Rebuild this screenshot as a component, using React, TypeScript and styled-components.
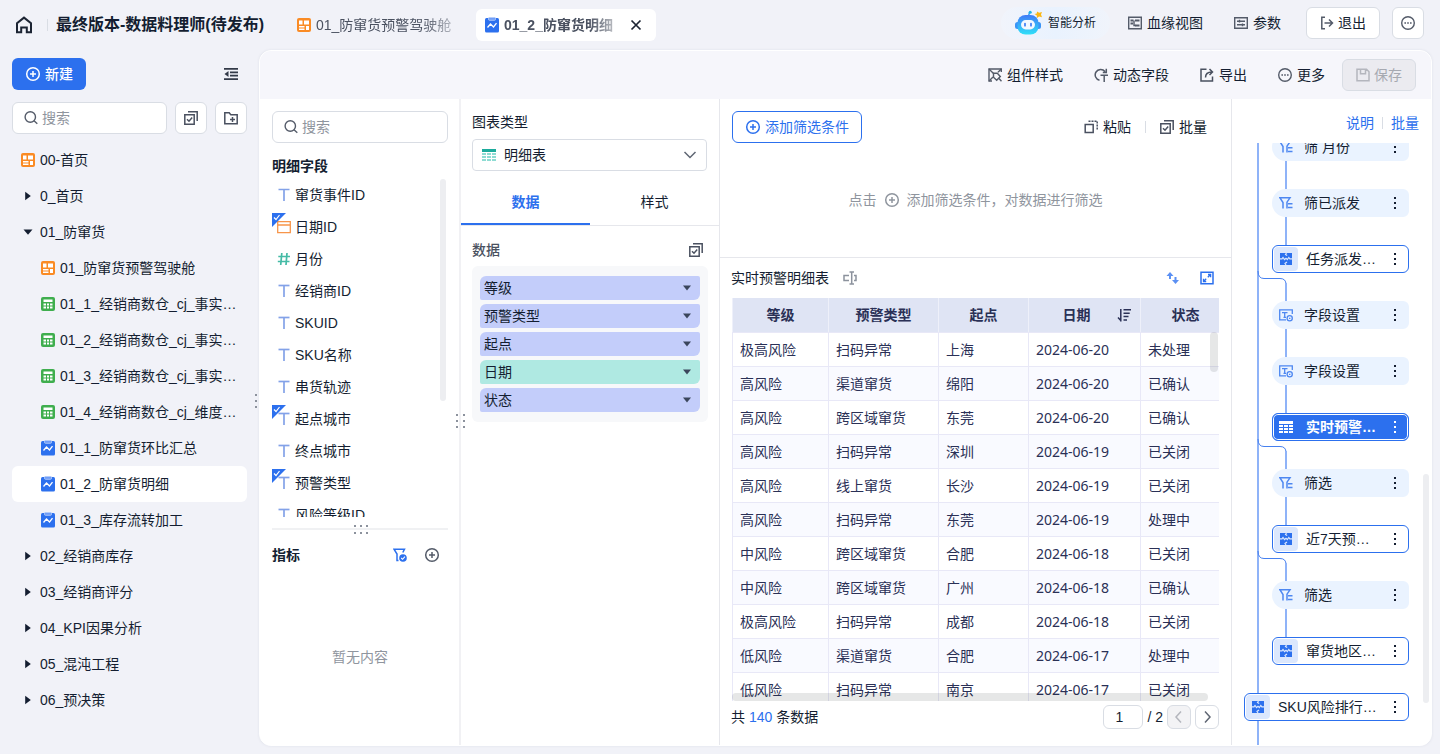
import React from "react";
import styled, { createGlobalStyle, css } from "styled-components";

const color = {
  ink: "#141e31",
  soft: "#4a5160",
  mute: "#8f959e",
  blue: "#2c70ee",
  line: "#e6e7ec",
  border: "#d9dde4",
  page: "#f1f2f8",
  table: "#2a3056",
};

const GlobalStyle = createGlobalStyle`
  *, *::before, *::after { box-sizing: border-box; }
  html, body { margin: 0; padding: 0; }
  body { background: ${color.page}; }
  body, button, input, select {
    font-family: "Liberation Sans", "Noto Sans CJK SC", sans-serif;
    font-size: 14px;
    line-height: 20px;
    color: ${color.ink};
  }
  button { border: 0; background: none; padding: 0; margin: 0; cursor: pointer; white-space: nowrap; }
  ul { list-style: none; margin: 0; padding: 0; }
  h1, h2, p { margin: 0; }
  svg { display: block; flex: none; }
`;

/* ---------- icons ---------- */

type IconProps = { children: React.ReactNode; size?: number; tone?: string; w?: number };

const Icon = ({ children, size = 14, tone = "currentColor", w = 1 }: IconProps) => (
  <svg width={size} height={size} viewBox={`0 0 ${size} ${size}`} fill="none" stroke={tone} strokeWidth={w} aria-hidden="true">
    {children}
  </svg>
);

const HomeIcon = () => (
  <Icon size={18} tone="#1c2433" w={2}>
    <path d="M2 16.200V7.200L9 1.600l7 5.600v9H11.800V11.500H6.200v4.700Z" />
  </Icon>
);
const PlusCircle = ({ tone = "currentColor" }: { tone?: string }) => (
  <Icon size={16} tone={tone} w={1.5}>
    <circle cx="8" cy="8" r="6.300" />
    <path d="M8 5v6M5 8h6" />
  </Icon>
);
const SearchIcon = () => (
  <Icon size={14} tone="#545b69" w={1.4}>
    <circle cx="6.300" cy="6" r="5.200" />
    <path d="M10 9.700l3.300 3" />
  </Icon>
);
const OutdentIcon = () => (
  <Icon size={14} tone="#333a48" w={1.7}>
    <path d="M0 1.800h14M6 5.300h8M6 8.700h8M0 12.200h14" />
    <path d="M4.500 4v6L.5 7z" fill="#333a48" stroke="none" />
  </Icon>
);
const BatchIcon = ({ tone = "#4a5160" }: { tone?: string }) => (
  <Icon size={14} tone={tone} w={1.5}>
    <path d="M.8 3.800h9.400v9.400H.8zM4 .8h9.200V10" />
    <path d="M3 8.200l2 2 3.200-3.600" />
  </Icon>
);
const FolderPlusIcon = () => (
  <Icon size={14} tone="#4a5160" w={1.5}>
    <path d="M.8 1.800h4.400l1.600 2h6.400v9H.8z" />
    <path d="M8.500 6v5M6 8.500h5" />
  </Icon>
);
const BoardIcon = () => (
  <Icon size={14}>
    <rect width="14" height="14" rx="2" fill="#fa8b24" stroke="none" />
    <path d="M2 2.500h3.500v4H2zM7 2.500h5v4H7zM2 8h5.500v1.500H2zM2 10.500h5.500V12H2zM9 8h3v4H9z" fill="#fff" stroke="none" />
  </Icon>
);
const SheetIcon = () => (
  <Icon size={14}>
    <rect width="14" height="14" rx="2" fill="#3fae4e" stroke="none" />
    <path d="M2.500 2.500h9v2.500h-9zM2.500 6.500H5v2H2.500zM6 6.500h2v2H6zM9 6.500h2.500v2H9zM2.500 9.600H5v2H2.500zM6 9.600h2v2H6zM9 9.600h2.500v2H9z" fill="#fff" stroke="none" />
  </Icon>
);
const ClipIcon = () => (
  <svg width="14" height="16" viewBox="0 0 14 16" aria-hidden="true">
    <rect y="1" width="14" height="14.500" rx="1.500" fill="#2c70ee" />
    <rect x="3.500" y=".3" width="7" height="3" rx="1" fill="#6f9df7" stroke="#cfdffc" strokeWidth=".7" />
    <path d="M2.500 10.500L5.500 7l3 3 3-3.800" fill="none" stroke="#fff" strokeWidth="1.300" />
  </svg>
);
const CloseIcon = () => (
  <Icon size={12} tone="#1c2433" w={1.7}>
    <path d="M1.500 1.500l9 9M10.500 1.500l-9 9" />
  </Icon>
);
const RobotIcon = () => (
  <svg width="28" height="26" viewBox="0 0 28 26" aria-hidden="true">
    <defs>
      <linearGradient id="bot" x1="0" y1="0" x2="0" y2="1">
        <stop offset="0" stopColor="#3f7bf7" />
        <stop offset="1" stopColor="#2fe0f8" />
      </linearGradient>
    </defs>
    <path d="M13.500 6l1.200-4" stroke="#35a0f5" strokeWidth="1.500" />
    <circle cx="15.200" cy="2.200" r="1.500" fill="#1fb4e8" />
    <rect x="0" y="12" width="5" height="7" rx="2.500" fill="#3a94f6" />
    <rect x="21" y="12" width="5" height="7" rx="2.500" fill="#3a94f6" />
    <rect x="2.500" y="5" width="21" height="19.500" rx="8" fill="url(#bot)" />
    <rect x="6" y="10" width="14" height="9.500" rx="4.700" fill="#f3f9ff" />
    <path d="M10 13.500v2.200M16 13.500v2.200" stroke="#3b7cf5" strokeWidth="1.700" strokeLinecap="round" />
    <path d="M22 1.500l2.200 1.200L27 2l-1 2.600 1 2.600-2.900-.6L22 8l-.2-2.600L19.500 4l2.300-.6z" fill="#fbb713" />
  </svg>
);
const LineageIcon = () => (
  <Icon size={14} tone="#545b69" w={1.4}>
    <path d="M.7 1.200h12.600v11.600H.7z" />
    <path d="M2.500 4.500H5.500M2.500 7.500H5M7 4.500h4.500M7 9.500h4.500" strokeWidth="2" />
    <path d="M6 4.500v5h1.500" />
  </Icon>
);
const ParamIcon = () => (
  <Icon size={14} tone="#545b69" w={1.4}>
    <path d="M.7 1.700h12.600v10.600H.7z" />
    <path d="M3 5.200h8M3 8.800h8M5.500 3.800v2.800M8.500 7.400v2.800" />
  </Icon>
);
const ExitIcon = () => (
  <Icon size={14} tone="#545b69" w={1.5}>
    <path d="M5 1.200H1.800v11.600H5M4.500 7h8M9 3.500L12.500 7 9 10.500" />
  </Icon>
);
const MoreCircle = () => (
  <Icon size={14} tone="#545b69" w={1.4}>
    <circle cx="7" cy="7" r="6.300" />
    <path d="M3.400 7H5M6.200 7h1.600M9 7h1.600" strokeWidth="1.700" />
  </Icon>
);
const StyleIcon = () => (
  <Icon size={14} tone="#545b69" w={1.4}>
    <path d="M13.300 4V1H1v12h3" />
    <path d="M1 1l5 5M1 13l4-4M13.300 1L10 4.300" />
    <path d="M5.500 5.300h3.800l3 3.200-3.600 3.800-3.200-3.100zM11 10.500l2.500 2.700" />
  </Icon>
);
const DynamicIcon = () => (
  <Icon size={14} tone="#545b69" w={1.5}>
    <path d="M5.500 12.300A5.500 5.500 0 1 1 11 3.500M12.300.8v3.700H8.800" />
    <path d="M6.500 7.300h7.500M10.200 7.300V14" />
  </Icon>
);
const ExportIcon = () => (
  <Icon size={14} tone="#4a5160" w={1.5}>
    <path d="M6.500 1.200H1v11.800h11.500V8.500" />
    <path d="M5.500 9.500c0-4 2-5.500 6.500-5.500M9.500 1l3 3-3 3" />
  </Icon>
);
const SaveIcon = () => (
  <Icon size={14} tone="#b4b6bd" w={1.5}>
    <path d="M1 1.200h9.500L13 3.700v9.100H1zM4.500 1.200v4.600h5V1.200" />
  </Icon>
);
const TextTypeIcon = () => (
  <Icon size={14} tone="#83a2e8" w={1.7}>
    <path d="M1.500 1.500h11" />
    <path d="M7 1.500v11.500" />
  </Icon>
);
const DateTypeIcon = () => (
  <Icon size={14} tone="#f7954a" w={1.3}>
    <path d="M.7 1.700h12.600v11H.7zM.7 5h12.600" />
  </Icon>
);
const NumberTypeIcon = () => (
  <Icon size={14} tone="#45bba6" w={1.7}>
    <path d="M4.800 1L3.700 13M10 1L9 13M1.300 4.500h11.700M.8 9.500h11.700" />
  </Icon>
);
const FilterCheckIcon = () => (
  <Icon size={14} tone="#2c70ee" w={1.5}>
    <path d="M5.500 12.500H4V6L1 1.200h10.500L9.800 4.500" />
    <circle cx="10" cy="10" r="3.800" fill="#2c70ee" stroke="none" />
    <path d="M8.200 10l1.400 1.300 2.300-2.600" stroke="#fff" strokeWidth="1.100" />
  </Icon>
);
const TableGlyph = () => (
  <Icon size={14}>
    <path d="M0 1h14v3H0z" fill="#1cab9c" stroke="none" />
    <path d="M0 5h4v2H0zM5 5h4v2H5zM10 5h4v2h-4zM0 8h4v2H0zM5 8h4v2H5zM10 8h4v2h-4zM0 11h4v2H0zM5 11h4v2H5zM10 11h4v2h-4z" fill="#8edcd3" stroke="none" />
  </Icon>
);
const WhiteTableGlyph = () => (
  <Icon size={14}>
    <path d="M0 1h14v3H0zM0 5h4v2H0zM5 5h4v2H5zM10 5h4v2h-4zM0 8h4v2H0zM5 8h4v2H5zM10 8h4v2h-4zM0 11h4v2H0zM5 11h4v2H5zM10 11h4v2h-4z" fill="#fff" stroke="none" />
  </Icon>
);
const Chevron = ({ d = "M1.500 4L7 9.500l5.500-5.500", tone = "#5f6673" }: { d?: string; tone?: string }) => (
  <Icon size={14} tone={tone} w={1.5}>
    <path d={d} />
  </Icon>
);
const Caret = ({ open = false, tone = "#141e31" }: { open?: boolean; tone?: string }) => (
  <Icon size={10}>
    <path d={open ? "M.5 2.500h9L5 7.800z" : "M2.200.8v8.400L7.800 5z"} fill={tone} stroke="none" />
  </Icon>
);
const PillCaret = () => (
  <Icon size={10}>
    <path d="M1 2.500h8L5 7.500z" fill="#3b465c" stroke="none" />
  </Icon>
);
const PasteIcon = () => (
  <Icon size={14} tone="#4a5160" w={1.5}>
    <path d="M1.200 4.500h8v8h-8z" />
    <path d="M4.500 1.200h8.700v8.800" strokeDasharray="2 1" />
  </Icon>
);
const RenameIcon = () => (
  <Icon size={14} tone="#8c929d" w={1.5}>
    <path d="M6 4.500H1v5h5M11 4.500h2v5h-2M6.500 1h4.500M6.500 13h4.500M8.700 1v12" />
  </Icon>
);
const SwapIcon = () => (
  <Icon size={14}>
    <path d="M.5 5L4 1l3.500 4H5v3H3V5zM6 9h2.500V6h2v3H13l-3.500 4z" fill="#5b90f3" stroke="none" />
  </Icon>
);
const ExpandIcon = () => (
  <Icon size={14} tone="#2c70ee" w={1.5}>
    <path d="M1 1.200h12v11.600H1z" />
    <path d="M7.800 6.200L10.500 3.500M8 3.500h2.600v2.700M6.200 7.800L3.500 10.500M3.500 7.800v2.700h2.700" strokeWidth="1.300" />
  </Icon>
);
const SortIcon = () => (
  <Icon size={14} tone="#2a3056" w={1.5}>
    <path d="M3.800 1v12.500M1 9.500l2.800 3M6.500 1.800H14M6.500 5.200h6.200M6.500 8.600h5M6.500 12h3.500" />
  </Icon>
);
const FilterEqIcon = () => (
  <Icon size={14} tone="#4d87f1" w={1.5}>
    <path d="M4 12.500V6.500L1 1.800h10L8 6.200v6.300M9 7.800h4.500M9 11.500h4.500" />
  </Icon>
);
const FieldSetIcon = () => (
  <Icon size={14} tone="#4d87f1" w={1.3}>
    <path d="M7 11.800H.7V1.800h12.600V6M3 4.600h5.500M5.700 4.600v4.700M4.500 9.300h2.500" />
    <circle cx="10.700" cy="10.300" r="2.600" />
    <path d="M10 10.300h1.400" />
  </Icon>
);
const GridIcon = () => (
  <Icon size={14}>
    <path d="M1 1h12v12H1z" fill="#2c70ee" stroke="none" />
    <path d="M1 6.800h2l1-1.300 1.500 2L7 6.200l1.300 1.300 1.500-2 1 1.300H13M7.500 1l-1 1.500 1.700 1M7 13l-1-1.500L8 10" stroke="#dbe7fd" strokeWidth="1.200" />
  </Icon>
);
const Kebab = ({ tone = "#141e31" }: { tone?: string }) => (
  <Icon size={14}>
    <path d="M6 1h2v2H6zM6 6h2v2H6zM6 11h2v2H6z" fill={tone} stroke="none" />
  </Icon>
);

/* ---------- shell ---------- */

const Shell = styled.div`
  display: flex;
  flex-direction: column;
  height: 100vh;
  min-height: 640px;
  min-width: 1200px;
  background: ${color.page};
  overflow: hidden;
`;
const Header = styled.header`
  display: flex;
  align-items: center;
  flex: none;
  height: 50px;
  padding: 0 16px 0 15px;
`;
const HeadDivider = styled.i`
  width: 1px;
  height: 12px;
  margin: 0 8px 0 14px;
  background: ${color.border};
`;
const Title = styled.h1`
  font-size: 16px;
  line-height: 24px;
  font-weight: 700;
`;
const FileTabs = styled.nav`
  display: flex;
  margin-left: 24px;
  gap: 8px;
`;
const FileTab = styled.button<{ $active?: boolean }>`
  display: flex;
  align-items: center;
  gap: 5px;
  width: 180px;
  height: 32px;
  padding: 0 9px;
  border-radius: 6px;
  color: ${color.soft};
  background: ${(p) => (p.$active ? "#fff" : "transparent")};
  font-weight: ${(p) => (p.$active ? 600 : 400)};
`;
const FadeText = styled.span`
  margin-right: 12px;
  mask-image: linear-gradient(to right, #000 78%, rgba(0, 0, 0, 0.4));
`;
const HeadTools = styled.div`
  display: flex;
  align-items: center;
  align-self: flex-start;
  margin: 7px 0 0 auto;
  height: 32px;
  gap: 12px;
`;
const SmartButton = styled.button`
  display: flex;
  align-items: center;
  gap: 5px;
  height: 32px;
  padding: 0 14px;
  border-radius: 16px;
  font-size: 12px;
  background: linear-gradient(90deg, #f1f4fb, #e9f2fe 50%, #f0f4fb);
`;
const TextButton = styled.button`
  display: flex;
  align-items: center;
  gap: 5px;
  height: 32px;
`;
const HeadLinks = styled.div`
  display: flex;
  gap: 31px;
  margin: 0 13px 0 6px;
`;
const OutlineButton = styled.button<{ $square?: boolean; $muted?: boolean; $accent?: boolean }>`
  display: flex;
  align-items: center;
  justify-content: center;
  gap: 4px;
  flex: none;
  height: 32px;
  padding: 0 ${(p) => (p.$square ? 0 : p.$accent ? 12 : 13)}px;
  ${(p) => p.$square && "width: 32px;"}
  border: 1px solid ${(p) => (p.$accent ? color.blue : color.border)};
  border-radius: 6px;
  background: ${(p) => (p.$muted ? "#ebebf0" : "#fff")};
  color: ${(p) => (p.$accent ? color.blue : p.$muted ? "#a6a9b1" : color.ink)};
`;
const Body = styled.div`
  display: flex;
  flex: 1;
  min-height: 0;
  padding: 0 8px 8px 0;
`;

/* ---------- sidebar ---------- */

const Sidebar = styled.aside`
  position: relative;
  flex: none;
  width: 259px;
  padding: 8px 12px;
`;
const SideTop = styled.div`
  display: flex;
  align-items: center;
  justify-content: space-between;
  padding-right: 9px;
`;
const NewButton = styled.button`
  display: flex;
  align-items: center;
  gap: 4px;
  height: 32px;
  padding: 0 13px;
  border-radius: 6px;
  background: ${color.blue};
  color: #fff;
  font-weight: 500;
`;
const SideSearch = styled.div`
  display: flex;
  gap: 8px;
  width: 235px;
  margin: 12px 0 8px;
`;
const SearchBox = styled.label`
  display: flex;
  align-items: center;
  flex: 1;
  min-width: 0;
  height: 32px;
  padding: 0 11px;
  gap: 4px;
  border: 1px solid ${color.border};
  border-radius: 6px;
  background: #fff;
  input {
    flex: 1;
    min-width: 0;
    padding: 0;
    border: 0;
    outline: 0;
    background: none;
  }
  input::placeholder { color: ${color.mute}; opacity: 1; }
`;
const TreeRow = styled.button<{ $deep?: boolean; $active?: boolean }>`
  display: flex;
  align-items: center;
  width: 235px;
  height: 36px;
  padding: 0 10px 0 ${(p) => (p.$deep ? 28 : 8)}px;
  gap: 4px;
  border-radius: 6px;
  text-align: left;
  background: ${(p) => (p.$active ? "#fff" : "transparent")};
  span { overflow: hidden; text-overflow: ellipsis; }
`;
const TreeMark = styled.i`
  display: flex;
  align-items: center;
  justify-content: center;
  flex: none;
  width: 16px;
`;
const Grip = styled.i<{ $side?: boolean; $flat?: boolean }>`
  position: absolute;
  z-index: 1;
  background: radial-gradient(circle at 1px 1px, #8c929d 1px, transparent 1px);
  ${(p) =>
    p.$flat
      ? css`
          left: 50%;
          top: -5px;
          margin-left: -6px;
          width: 14px;
          height: 9px;
          background-size: 6px 7px;
        `
      : css`
          top: calc(50% - ${p.$side ? 4 : 8}px);
          right: ${p.$side ? "2px" : "-6px"};
          width: ${p.$side ? 2 : 9}px;
          height: 14px;
          background-size: 7px 6px;
        `}
`;

/* ---------- main card ---------- */

const Card = styled.main`
  display: flex;
  flex-direction: column;
  flex: 1;
  min-width: 0;
  border: 1px solid #fff;
  border-radius: 12px;
  background: #fff;
  box-shadow: 0 0 3px rgba(30, 40, 80, 0.08);
  overflow: hidden;
`;
const Toolbar = styled.div`
  display: flex;
  align-items: center;
  justify-content: flex-end;
  flex: none;
  gap: 31px;
  height: 48px;
  padding-right: 15px;
  background: #f6f6fb;
`;
const SaveSlot = styled.div`
  margin-left: -14px;
`;
const Columns = styled.div`
  display: flex;
  flex: 1;
  min-height: 0;
`;
const Column = styled.section<{ $width?: number; $soft?: boolean }>`
  position: relative;
  display: flex;
  flex-direction: column;
  ${(p) => (p.$width ? `flex: none; width: ${p.$width}px;` : "flex: 1; min-width: 0;")}
  border-right: ${(p) => (p.$soft ? "2px solid #f1f1f4" : `1px solid ${color.line}`)};
  &:last-child { border-right: 0; }
`;

const FieldTop = styled.div`
  padding: 12px 11px 0 12px;
  h2 { margin: 13px 0 3px; }
`;
const SubHead = styled.h2`
  font-size: 14px;
  line-height: 20px;
  font-weight: 700;
`;
const FieldList = styled.ul`
  position: relative;
  flex: 1;
  min-height: 0;
  margin: 0 11px 0 12px;
  overflow: hidden;
`;
const Thumb = styled.i<{ $top: string; $height: string }>`
  position: absolute;
  top: ${(p) => p.$top};
  right: 2px;
  width: 6px;
  height: ${(p) => p.$height};
  border-radius: 3px;
  background: #edeef1;
`;
const FieldRow = styled.button`
  position: relative;
  display: flex;
  align-items: center;
  gap: 4px;
  width: 100%;
  height: 32px;
  padding-left: 5px;
`;
const Tick = styled.svg`
  position: absolute;
  left: 0;
  top: 2px;
`;
const Metrics = styled.div`
  position: relative;
  flex: none;
  height: 217px;
  margin: 11px 11px 0 12px;
  border-top: 2px solid #f0f1f3;
`;
const MetricsHead = styled.div`
  display: flex;
  align-items: center;
  gap: 17px;
  height: 50px;
  padding-right: 8px;
  h2 { margin-right: auto; }
`;
const Empty = styled.p`
  margin-top: 67px;
  text-align: center;
  color: ${color.mute};
`;

const ConfigTop = styled.div`
  padding: 13px 12px 8px 11px;
`;
const SelectBox = styled.div`
  display: flex;
  align-items: center;
  height: 32px;
  margin-top: 7px;
  padding: 0 9px;
  gap: 8px;
  border: 1px solid ${color.border};
  border-radius: 4px;
  select {
    flex: 1;
    appearance: none;
    border: 0;
    outline: 0;
    padding: 0;
    background: none;
  }
`;
const Tabs = styled.div`
  display: flex;
  height: 47px;
  border-bottom: 1px solid ${color.line};
`;
const Tab = styled.button<{ $on?: boolean }>`
  flex: 1;
  height: 46px;
  border-top: 2px solid transparent;
  border-bottom: 2px solid ${(p) => (p.$on ? color.blue : "transparent")};
  color: ${(p) => (p.$on ? color.blue : color.ink)};
  font-weight: ${(p) => (p.$on ? 600 : 400)};
`;
const GroupHead = styled.div`
  display: flex;
  align-items: center;
  justify-content: space-between;
  padding: 14px 16px 6px 11px;
  color: ${color.soft};
  font-weight: 500;
`;
const PillBox = styled.div`
  display: flex;
  flex-direction: column;
  gap: 4px;
  margin: 0 11px;
  padding: 10px 8px;
  border-radius: 6px;
  background: #f7f8fa;
`;
const Pill = styled.button<{ $green?: boolean }>`
  display: flex;
  align-items: center;
  justify-content: space-between;
  height: 24px;
  padding: 0 8px 0 4px;
  border-radius: 6px 2px 6px 2px;
  background: ${(p) => (p.$green ? "#afe9e2" : "#c3cdfa")};
`;

/* ---------- table column ---------- */

const FilterArea = styled.div`
  flex: none;
  height: 159px;
  padding: 12px;
  border-bottom: 1px solid ${color.line};
`;
const FilterBar = styled.div`
  display: flex;
  align-items: center;
  justify-content: space-between;
  padding-right: 12px;
`;
const FilterActions = styled.div`
  display: flex;
  align-items: center;
  gap: 14px;
`;
const Divider = styled.i`
  width: 1px;
  height: 12px;
  background: ${color.border};
`;
const Hint = styled.p`
  display: flex;
  justify-content: center;
  align-items: center;
  gap: 7px;
  margin-top: 47px;
  color: ${color.mute};
`;
const TableHead = styled.div`
  display: flex;
  align-items: center;
  gap: 14px;
  flex: none;
  height: 40px;
  padding: 0 17px 0 11px;
`;
const HeadIcons = styled.div`
  display: flex;
  gap: 20px;
  margin-left: auto;
`;
const TableWrap = styled.div`
  position: relative;
  flex: 1;
  min-height: 0;
  margin: 0 12px;
  overflow: hidden;
`;
const DataTable = styled.table`
  width: 100%;
  min-width: 498px;
  table-layout: fixed;
  border-collapse: separate;
  border-spacing: 0;
  font-family: "Noto Sans", "Noto Sans CJK SC", sans-serif;
  color: ${color.table};
  th, td {
    height: 34px;
    padding: 0 7px;
    line-height: 20px;
    white-space: nowrap;
    text-align: left;
    border-left: 1px solid #e8e8f7;
  }
  td { border-top: 1px solid #e8e8f7; }
  th {
    background: #dfe4f4;
    border-left-color: #eef0fa;
    text-align: center;
    font-weight: 600;
  }
  tbody tr:nth-child(even) { background: #f9faff; }
`;
const SortHead = styled.div`
  display: flex;
  align-items: center;
  padding-right: 2px;
  span { flex: 1; }
`;
const OverlayBar = styled.i<{ $across?: boolean }>`
  position: absolute;
  border-radius: 4px;
  background: rgba(30, 32, 38, 0.11);
  ${(p) =>
    p.$across
      ? "left: 0; right: 11px; bottom: 0; height: 8px;"
      : "right: 1px; top: 34px; width: 8px; height: 40px;"}
`;
const Pager = styled.footer`
  display: flex;
  align-items: center;
  gap: 4px;
  flex: none;
  padding: 4px 12px 16px 11px;
  p { margin-right: auto; }
  em { font-style: normal; color: ${color.blue}; }
`;
const PageInput = styled.input`
  width: 40px;
  height: 24px;
  padding: 0 11px;
  border: 1px solid ${color.border};
  border-radius: 6px;
  outline: 0;
`;
const PageButton = styled.button`
  display: flex;
  align-items: center;
  justify-content: center;
  width: 24px;
  height: 24px;
  border: 1px solid ${color.border};
  border-radius: 6px;
  &:disabled { background: #f3f3f5; }
`;

/* ---------- flow column ---------- */

const FlowHead = styled.div`
  display: flex;
  align-items: center;
  justify-content: flex-end;
  gap: 8px;
  flex: none;
  height: 44px;
  padding: 4px 12px 0 0;
  a { color: ${color.blue}; text-decoration: none; }
`;
const FlowCanvas = styled.div`
  position: relative;
  flex: 1;
  min-height: 0;
  overflow: hidden;
`;
const FlowLines = styled.svg`
  position: absolute;
  left: 0;
  top: 0;
`;
const NodeList = styled.ul`
  position: relative;
  display: flex;
  flex-direction: column;
  align-items: flex-end;
  gap: 28px;
  margin-top: -10px;
  padding-right: 22px;
`;
const Node = styled.li<{ $kind: string; $wide?: boolean }>`
  display: flex;
  align-items: center;
  width: ${(p) => (p.$wide ? 165 : 137)}px;
  height: 28px;
  padding-right: 7px;
  border-radius: 6px;
  ${(p) =>
    p.$kind === "step" &&
    css`
      border-radius: 14px 6px 6px 14px;
      background: #eaf3ff;
    `}
  ${(p) =>
    p.$kind === "view" &&
    css`
      border: 1px solid ${color.blue};
      padding: 0 6px 0 1px;
      background: #fff;
    `}
  ${(p) =>
    p.$kind === "current" &&
    css`
      border: 1px solid ${color.blue};
      padding: 0 6px 0 1px;
      background: ${color.blue};
      box-shadow: inset 0 0 0 1px #fff;
      font-weight: 600;
      button { color: #fff; }
    `}
`;
const NodeMark = styled.i<{ $tile?: boolean; $step?: boolean }>`
  display: flex;
  align-items: center;
  justify-content: center;
  flex: none;
  width: ${(p) => (p.$step ? 28 : 24)}px;
  height: 24px;
  border-radius: 4px;
  background: ${(p) => (p.$tile ? "#dbe7fd" : "transparent")};
`;
const NodeLabel = styled.button<{ $step?: boolean }>`
  flex: 1;
  min-width: 0;
  padding: 0 7px 0 ${(p) => (p.$step ? 4 : 8)}px;
  overflow: hidden;
  text-overflow: ellipsis;
  text-align: left;
  font-weight: inherit;
`;

/* ---------- data ---------- */

type TreeItem = { name: string; mark: "board" | "sheet" | "clip" | "closed" | "open"; deep?: boolean; active?: boolean };
const tree: TreeItem[] = [
  { name: "00-首页", mark: "board" },
  { name: "0_首页", mark: "closed" },
  { name: "01_防窜货", mark: "open" },
  { name: "01_防窜货预警驾驶舱", mark: "board", deep: true },
  { name: "01_1_经销商数仓_cj_事实…", mark: "sheet", deep: true },
  { name: "01_2_经销商数仓_cj_事实…", mark: "sheet", deep: true },
  { name: "01_3_经销商数仓_cj_事实…", mark: "sheet", deep: true },
  { name: "01_4_经销商数仓_cj_维度…", mark: "sheet", deep: true },
  { name: "01_1_防窜货环比汇总", mark: "clip", deep: true },
  { name: "01_2_防窜货明细", mark: "clip", deep: true, active: true },
  { name: "01_3_库存流转加工", mark: "clip", deep: true },
  { name: "02_经销商库存", mark: "closed" },
  { name: "03_经销商评分", mark: "closed" },
  { name: "04_KPI因果分析", mark: "closed" },
  { name: "05_混沌工程", mark: "closed" },
  { name: "06_预决策", mark: "closed" },
];
const treeMarks = {
  board: <BoardIcon />,
  sheet: <SheetIcon />,
  clip: <ClipIcon />,
  closed: <Caret />,
  open: <Caret open />,
};

type Field = { name: string; type: "text" | "date" | "number"; used?: boolean };
const fields: Field[] = [
  { name: "窜货事件ID", type: "text" },
  { name: "日期ID", type: "date", used: true },
  { name: "月份", type: "number" },
  { name: "经销商ID", type: "text" },
  { name: "SKUID", type: "text" },
  { name: "SKU名称", type: "text" },
  { name: "串货轨迹", type: "text" },
  { name: "起点城市", type: "text", used: true },
  { name: "终点城市", type: "text" },
  { name: "预警类型", type: "text", used: true },
  { name: "风险等级ID", type: "text" },
];
const fieldMarks = { text: <TextTypeIcon />, date: <DateTypeIcon />, number: <NumberTypeIcon /> };

const pills = ["等级", "预警类型", "起点", "日期", "状态"];

const rows = [
  ["极高风险", "扫码异常", "上海", "2024-06-20", "未处理"],
  ["高风险", "渠道窜货", "绵阳", "2024-06-20", "已确认"],
  ["高风险", "跨区域窜货", "东莞", "2024-06-20", "已确认"],
  ["高风险", "扫码异常", "深圳", "2024-06-19", "已关闭"],
  ["高风险", "线上窜货", "长沙", "2024-06-19", "已关闭"],
  ["高风险", "扫码异常", "东莞", "2024-06-19", "处理中"],
  ["中风险", "跨区域窜货", "合肥", "2024-06-18", "已关闭"],
  ["中风险", "跨区域窜货", "广州", "2024-06-18", "已确认"],
  ["极高风险", "扫码异常", "成都", "2024-06-18", "已关闭"],
  ["低风险", "渠道窜货", "合肥", "2024-06-17", "处理中"],
  ["低风险", "扫码异常", "南京", "2024-06-17", "已关闭"],
];

type FlowNode = { name: string; kind: "step" | "view" | "current"; mark: "filter" | "field" | "grid" | "table"; wide?: boolean };
const nodes: FlowNode[] = [
  { name: "筛 月份", kind: "step", mark: "filter" },
  { name: "筛已派发", kind: "step", mark: "filter" },
  { name: "任务派发…", kind: "view", mark: "grid" },
  { name: "字段设置", kind: "step", mark: "field" },
  { name: "字段设置", kind: "step", mark: "field" },
  { name: "实时预警…", kind: "current", mark: "table" },
  { name: "筛选", kind: "step", mark: "filter" },
  { name: "近7天预…", kind: "view", mark: "grid" },
  { name: "筛选", kind: "step", mark: "filter" },
  { name: "窜货地区…", kind: "view", mark: "grid" },
  { name: "SKU风险排行…", kind: "view", mark: "grid", wide: true },
];
const nodeMarks = { filter: <FilterEqIcon />, field: <FieldSetIcon />, grid: <GridIcon />, table: <WhiteTableGlyph /> };
const branchTops = [130, 298, 410];

export default function App() {
  return (
    <>
      <GlobalStyle />
      <Shell>
        <Header>
          <button aria-label="主页"><HomeIcon /></button>
          <HeadDivider />
          <Title>最终版本-数据料理师(待发布)</Title>
          <FileTabs>
            <FileTab>
              <BoardIcon />
              <FadeText>01_防窜货预警驾驶舱</FadeText>
            </FileTab>
            <FileTab $active>
              <ClipIcon />
              <FadeText>01_2_防窜货明细</FadeText>
              <CloseIcon />
            </FileTab>
          </FileTabs>
          <HeadTools>
            <SmartButton><RobotIcon />智能分析</SmartButton>
            <HeadLinks>
              <TextButton><LineageIcon />血缘视图</TextButton>
              <TextButton><ParamIcon />参数</TextButton>
            </HeadLinks>
            <OutlineButton><ExitIcon />退出</OutlineButton>
            <OutlineButton $square aria-label="更多操作"><MoreCircle /></OutlineButton>
          </HeadTools>
        </Header>

        <Body>
          <Sidebar>
            <SideTop>
              <NewButton><PlusCircle />新建</NewButton>
              <button aria-label="收起"><OutdentIcon /></button>
            </SideTop>
            <SideSearch>
              <SearchBox>
                <SearchIcon />
                <input placeholder="搜索" aria-label="搜索文件" />
              </SearchBox>
              <OutlineButton $square aria-label="批量选择"><BatchIcon /></OutlineButton>
              <OutlineButton $square aria-label="新建文件夹"><FolderPlusIcon /></OutlineButton>
            </SideSearch>
            <ul>
              {tree.map((t) => (
                <li key={t.name}>
                  <TreeRow $deep={t.deep} $active={t.active}>
                    <TreeMark>{treeMarks[t.mark]}</TreeMark>
                    <span>{t.name}</span>
                  </TreeRow>
                </li>
              ))}
            </ul>
            <Grip $side />
          </Sidebar>

          <Card>
            <Toolbar>
              <TextButton><StyleIcon />组件样式</TextButton>
              <TextButton><DynamicIcon />动态字段</TextButton>
              <TextButton><ExportIcon />导出</TextButton>
              <TextButton><MoreCircle />更多</TextButton>
              <SaveSlot>
                <OutlineButton $muted disabled><SaveIcon />保存</OutlineButton>
              </SaveSlot>
            </Toolbar>

            <Columns>
              <Column $width={201} $soft>
                <FieldTop>
                  <SearchBox>
                    <SearchIcon />
                    <input placeholder="搜索" aria-label="搜索字段" />
                  </SearchBox>
                  <SubHead>明细字段</SubHead>
                </FieldTop>
                <FieldList>
                  {fields.map((f) => (
                    <li key={f.name}>
                      <FieldRow>
                        {fieldMarks[f.type]}
                        {f.name}
                        {f.used && (
                          <Tick width="14" height="14" viewBox="0 0 14 14">
                            <path d="M0 0h14L0 14z" fill="#2c70ee" />
                            <path d="M2 4.500l2 2L7.500 2" fill="none" stroke="#fff" strokeWidth="1.200" />
                          </Tick>
                        )}
                      </FieldRow>
                    </li>
                  ))}
                  <Thumb as="li" $top="0" $height="222px" />
                </FieldList>
                <Metrics>
                  <Grip $flat />
                  <MetricsHead>
                    <SubHead>指标</SubHead>
                    <button aria-label="指标筛选"><FilterCheckIcon /></button>
                    <button aria-label="添加指标"><PlusCircle tone="#545b69" /></button>
                  </MetricsHead>
                  <Empty>暂无内容</Empty>
                </Metrics>
                <Grip />
              </Column>

              <Column $width={259}>
                <ConfigTop>
                  <label htmlFor="chart-type">图表类型</label>
                  <SelectBox>
                    <TableGlyph />
                    <select id="chart-type"><option>明细表</option></select>
                    <Chevron />
                  </SelectBox>
                </ConfigTop>
                <Tabs>
                  <Tab $on>数据</Tab>
                  <Tab>样式</Tab>
                </Tabs>
                <GroupHead>
                  数据
                  <button aria-label="批量编辑"><BatchIcon /></button>
                </GroupHead>
                <PillBox>
                  {pills.map((p) => (
                    <Pill key={p} $green={p === "日期"}>
                      {p}
                      <PillCaret />
                    </Pill>
                  ))}
                </PillBox>
              </Column>

              <Column>
                <FilterArea>
                  <FilterBar>
                    <OutlineButton $accent><PlusCircle />添加筛选条件</OutlineButton>
                    <FilterActions>
                      <TextButton><PasteIcon />粘贴</TextButton>
                      <Divider />
                      <TextButton><BatchIcon />批量</TextButton>
                    </FilterActions>
                  </FilterBar>
                  <Hint>点击<PlusCircle tone="#8f959e" />添加筛选条件，对数据进行筛选</Hint>
                </FilterArea>
                <TableHead>
                  实时预警明细表
                  <button aria-label="重命名"><RenameIcon /></button>
                  <HeadIcons>
                    <button aria-label="切换"><SwapIcon /></button>
                    <button aria-label="放大"><ExpandIcon /></button>
                  </HeadIcons>
                </TableHead>
                <TableWrap>
                  <DataTable>
                    <colgroup>
                      <col width="96" /><col width="110" /><col width="90" /><col width="112" /><col width="90" />
                    </colgroup>
                    <thead>
                      <tr>
                        <th>等级</th>
                        <th>预警类型</th>
                        <th>起点</th>
                        <th><SortHead><span>日期</span><SortIcon /></SortHead></th>
                        <th>状态</th>
                      </tr>
                    </thead>
                    <tbody>
                      {rows.map((r, i) => (
                        <tr key={i}>{r.map((c, j) => <td key={j}>{c}</td>)}</tr>
                      ))}
                    </tbody>
                  </DataTable>
                  <OverlayBar />
                  <OverlayBar $across />
                </TableWrap>
                <Pager>
                  <p>共 <em>140</em> 条数据</p>
                  <PageInput defaultValue="1" aria-label="页码" />
                  <span>/ 2</span>
                  <PageButton disabled aria-label="上一页"><Chevron d="M9 1.500L4 7l5 5.500" tone="#b4b6bd" /></PageButton>
                  <PageButton aria-label="下一页"><Chevron d="M5 1.500L10 7l-5 5.500" /></PageButton>
                </Pager>
              </Column>

              <Column $width={199}>
                <FlowHead>
                  <a href="#intro">说明</a>
                  <Divider />
                  <a href="#batch">批量</a>
                </FlowHead>
                <FlowCanvas>
                  <FlowLines width="180" height="100%">
                    <path d="M26 0V2000" stroke="#8fb3f8" strokeWidth="2" />
                    <path d="M54 18V46M54 74V102M54 186V214M54 242V270M54 354V382M54 466V494" stroke="#8fb3f8" strokeWidth="2" />
                    {branchTops.map((y) => (
                      <g key={y} fill="none">
                        <path d={`M26 ${y - 2}q0 7.500 6 7.500h16q6 0 6 6`} stroke="#4680ef" />
                        <path d={`M54 ${y + 10}V${y + 28}`} stroke="#8fb3f8" strokeWidth="2" />
                      </g>
                    ))}
                  </FlowLines>
                  <NodeList>
                    {nodes.map((n, i) => (
                      <Node key={i} $kind={n.kind} $wide={n.wide}>
                        <NodeMark $tile={n.kind === "view"} $step={n.kind === "step"}>{nodeMarks[n.mark]}</NodeMark>
                        <NodeLabel $step={n.kind === "step"}>{n.name}</NodeLabel>
                        <button aria-label="节点菜单"><Kebab tone={n.kind === "current" ? "#fff" : "#141e31"} /></button>
                      </Node>
                    ))}
                  </NodeList>
                  <Thumb $top="55%" $height="38%" />
                </FlowCanvas>
              </Column>
            </Columns>
          </Card>
        </Body>
      </Shell>
    </>
  );
}
